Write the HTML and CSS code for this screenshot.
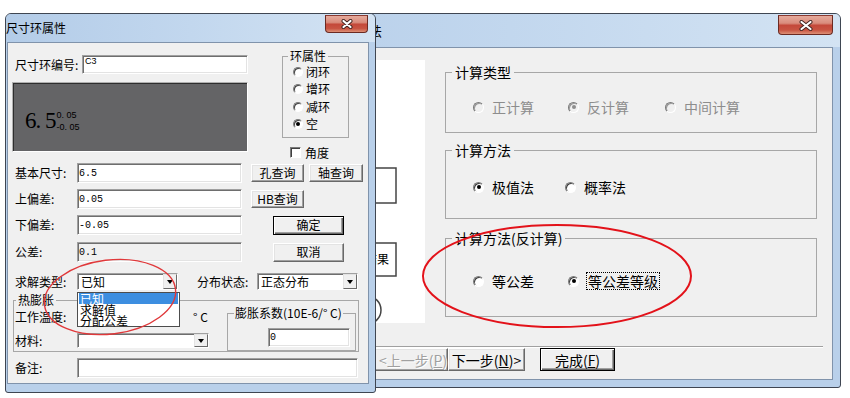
FILE: index.html
```html
<!DOCTYPE html>
<html lang="zh-CN">
<head>
  <meta charset="UTF-8">
  <meta name="viewport" content="width=device-width, initial-scale=1.0">
  <title>尺寸环属性</title>
  <link rel="stylesheet" href="styles.css">
</head>
<body>
  <div class="desktop">

    <!-- 计算向导窗口（被左边的对话框挡住一部分） -->
    <div class="window wizard">
      <div class="titlebar">
        <span class="title">计算方法</span>
        <span class="close close-lg">
          <svg width="14" height="11" viewBox="0 0 14 11"><path class="x-edge" d="M2.5 2 L11.5 9 M11.5 2 L2.5 9"/><path class="x-face" d="M2.5 2 L11.5 9 M11.5 2 L2.5 9"/></svg>
        </span>
      </div>
      <div class="client">
        <div class="wiz-main">
          <div class="preview">
            <svg width="224" height="263" viewBox="0 0 224 263">
              <rect x="110" y="108" width="85" height="35"/>
              <rect x="110" y="183" width="85" height="33"/>
              <text x="188" y="204" text-anchor="end">计算结果</text>
              <circle cx="166" cy="250" r="14"/>
            </svg>
          </div>
          <div class="options">
            <fieldset class="group g-type off">
              <legend>计算类型</legend>
              <div class="choices">
                <label class="choice c95"><span class="radio"></span>正计算</label>
                <label class="choice c97"><span class="radio on"></span>反计算</label>
                <label class="choice"><span class="radio"></span>中间计算</label>
              </div>
            </fieldset>
            <fieldset class="group g-method">
              <legend>计算方法</legend>
              <div class="choices">
                <label class="choice c92"><span class="radio on"></span>极值法</label>
                <label class="choice"><span class="radio"></span>概率法</label>
              </div>
            </fieldset>
            <fieldset class="group g-reverse">
              <legend>计算方法(反计算)</legend>
              <div class="choices">
                <label class="choice c95"><span class="radio"></span>等公差</label>
                <label class="choice"><span class="radio on"></span><span class="focus">等公差等级</span></label>
              </div>
            </fieldset>
          </div>
        </div>
        <div class="wiz-sep"></div>
        <div class="wiz-buttons">
          <span class="btn wbtn prev">&lt;上一步(<u>P</u>)</span>
          <span class="btn wbtn next">下一步(<u>N</u>)&gt;</span>
          <span class="btn wbtn finish default">完成(<u>F</u>)</span>
        </div>
      </div>
    </div>

    <!-- 尺寸环属性对话框 -->
    <div class="window ring">
      <div class="titlebar">
        <span class="title">尺寸环属性</span>
        <span class="close">
          <svg width="12" height="10" viewBox="0 0 12 10"><path class="x-edge" d="M2.5 2 L9.5 8 M9.5 2 L2.5 8"/><path class="x-face" d="M2.5 2 L9.5 8 M9.5 2 L2.5 8"/></svg>
        </span>
      </div>
      <div class="client">
        <div class="top">
          <div class="top-main">
            <div class="id-row">
              <span class="caption">尺寸环编号:</span>
              <input class="field id-field" type="text" value="C3" readonly>
            </div>
            <div class="display">
              <span class="size">6. 5</span>
              <span class="tol">
                <span>0. 05</span>
                <span>-0. 05</span>
              </span>
            </div>
          </div>
          <div class="top-side">
            <fieldset class="ring-type">
              <legend>环属性</legend>
              <div class="ring-choices">
                <label class="choice"><span class="radio"></span>闭环</label>
                <label class="choice"><span class="radio"></span>增环</label>
                <label class="choice"><span class="radio"></span>减环</label>
                <label class="choice"><span class="radio on"></span>空</label>
              </div>
            </fieldset>
            <label class="angle"><span class="check"></span>角度</label>
          </div>
        </div>

        <div class="row row-b">
          <span class="caption">基本尺寸:</span>
          <input class="field" type="text" value="6.5" readonly>
          <span class="btn query">孔查询</span>
          <span class="btn query wide">轴查询</span>
        </div>
        <div class="row row-c">
          <span class="caption">上偏差:</span>
          <input class="field" type="text" value="0.05" readonly>
          <span class="btn query">HB查询</span>
        </div>
        <div class="row row-d">
          <span class="caption">下偏差:</span>
          <input class="field" type="text" value="-0.05" readonly>
          <span class="btn action default">确定</span>
        </div>
        <div class="row row-e">
          <span class="caption">公差:</span>
          <input class="field" type="text" value="0.1" disabled>
          <span class="btn action">取消</span>
        </div>

        <div class="row row-f">
          <span class="caption">求解类型:</span>
          <div class="combo"><span class="combo-text">已知</span><span class="arrow"></span></div>
          <span class="caption caption-2">分布状态:</span>
          <div class="combo"><span class="combo-text">正态分布</span><span class="arrow"></span></div>
        </div>

        <fieldset class="thermal">
          <legend>热膨胀</legend>
          <div class="thermal-body">
            <div class="thermal-left">
              <div class="temp-row">
                <span class="caption">工作温度:</span>
                <span class="temp-slot"></span>
                <span class="unit">° C</span>
              </div>
              <div class="mat-row">
                <span class="caption">材料:</span>
                <div class="combo combo-mat"><span class="combo-text"></span><span class="arrow"></span></div>
              </div>
            </div>
            <fieldset class="coef">
              <legend>膨胀系数(10E-6/° C)</legend>
              <input class="field coef-field" type="text" value="0" readonly>
            </fieldset>
          </div>
        </fieldset>

        <div class="row row-g">
          <span class="caption">备注:</span>
          <input class="field note-field" type="text" value="" readonly>
        </div>

        <!-- 求解类型 的下拉列表 -->
        <div class="droplist">
          <div class="item selected">已知</div>
          <div class="item">求解值</div>
          <div class="item">分配公差</div>
        </div>
      </div>
    </div>

    <!-- 红色标注圈 -->
    <svg class="marks" width="850" height="398" viewBox="0 0 850 398">
      <ellipse class="mark-thin" cx="110" cy="297" rx="66" ry="37" transform="rotate(-7 110 297)"/>
      <ellipse cx="557" cy="276" rx="134" ry="51"/>
    </svg>
  </div>
</body>
</html>
```

FILE: styles.css
```css
* {
  box-sizing: border-box;
}

body {
  margin: 0;
  background: #fff;
  font-family: "Noto Sans CJK SC", "Noto Sans", sans-serif;
  font-size: 12px;
  line-height: 16px;
  color: #000;
}

.desktop {
  position: relative;
  width: 850px;
  height: 398px;
  overflow: hidden;
}

/* windows */
.window {
  position: absolute;
  display: flex;
  flex-direction: column;
  border: 1px solid #3f4652;
  border-radius: 6px 6px 3px 3px;
  background: #b9d0ea;
}

.ring {
  left: 5px;
  top: 13px;
  width: 371px;
  height: 380px;
  z-index: 2;
}

.wizard {
  left: 180px;
  top: 13px;
  width: 661px;
  height: 375px;
  z-index: 1;
}

.titlebar {
  display: flex;
  justify-content: space-between;
  align-items: flex-start;
  border-radius: 5px 5px 0 0;
  background: linear-gradient(to right, #b3cce8, #c2d7ee 50%, #d3e3f3);
}

.ring .titlebar {
  height: 28px;
  padding-right: 7px;
}

.wizard .titlebar {
  height: 33px;
  padding-right: 7px;
}

.title {
  align-self: center;
}

.wizard .title {
  width: 201px;
  text-align: right;
  font-size: 13px;
  white-space: nowrap;
}

.close {
  display: flex;
  align-items: center;
  justify-content: center;
  width: 43px;
  height: 18px;
  margin-top: 1px;
  border: 1px solid #6b2a22;
  border-top-color: #8a3a30;
  border-radius: 0 0 4px 4px;
  background: linear-gradient(#e6aa9c 0%, #d98c7c 40%, #c4493a 52%, #c85442 78%, #dd9076 100%);
}

.close-lg {
  width: 55px;
  height: 20px;
}

.x-edge {
  fill: none;
  stroke: #40231f;
  stroke-width: 4;
  stroke-linecap: round;
}

.x-face {
  fill: none;
  stroke: #fff;
  stroke-width: 2.2;
  stroke-linecap: round;
}

.client {
  position: relative;
  flex: 1;
  background: #f0f0f0;
  border: 1px solid #8093ab;
}

.ring .client {
  margin: 0 6px 8px 1px;
  padding: 7px 0 0 4px;
}

.wizard .client {
  margin: 0 7px 7px 7px;
}

/* common controls */
.caption {
  flex-shrink: 0;
  white-space: nowrap;
}

.field {
  display: block;
  margin: 0;
  padding: 0 1px;
  height: 20px;
  font-family: "Liberation Mono", monospace;
  font-size: 10px;
  color: #000;
  background: #fff;
  border: 1px solid;
  border-color: #a0a0a0 #fff #fff #a0a0a0;
  box-shadow: inset 1px 1px #6e6e6e, inset -1px -1px #e3e3e3;
  outline: none;
}

.field:disabled {
  background: #f0f0f0;
  color: #000;
}

.btn {
  display: flex;
  align-items: center;
  justify-content: center;
  flex-shrink: 0;
  background: #f0f0f0;
  border: 1px solid;
  border-color: #fff #696969 #696969 #fff;
  box-shadow: inset -1px -1px #a0a0a0, inset 1px 1px #e3e3e3;
  white-space: nowrap;
}

.btn.default {
  border-color: #000;
  box-shadow: inset 1px 1px #fff, inset -1px -1px #696969, inset -2px -2px #a0a0a0;
}

.radio {
  position: relative;
  display: inline-block;
  flex-shrink: 0;
  width: 10px;
  height: 10px;
  border-radius: 50%;
  background: #fff;
  border: 1px solid;
  border-color: #7a7a7a #fff #fff #7a7a7a;
  box-shadow: inset 1px 1px #404040;
}

.radio.on::after {
  content: "";
  position: absolute;
  left: 2px;
  top: 2px;
  width: 4px;
  height: 4px;
  border-radius: 50%;
  background: #000;
}

.choice {
  display: flex;
  align-items: center;
  white-space: nowrap;
}

.check {
  display: inline-block;
  width: 11px;
  height: 11px;
  background: #fff;
  border: 1px solid;
  border-color: #7a7a7a #fff #fff #7a7a7a;
  box-shadow: inset 1px 1px #404040;
}

fieldset {
  margin: 0;
  padding: 0;
  min-width: 0;
  border: 1px solid #a7a7a7;
}

legend {
  padding: 0 2px;
}

.combo {
  display: flex;
  flex-shrink: 0;
  width: 101px;
  height: 17px;
  background: #fff;
  border: 1px solid;
  border-color: #a0a0a0 #fff #fff #a0a0a0;
  box-shadow: inset 1px 1px #6e6e6e;
}

.combo-text {
  flex: 1;
  padding: 0 0 0 3px;
  line-height: 15px;
  white-space: nowrap;
}

.arrow {
  display: flex;
  align-items: center;
  justify-content: center;
  width: 14px;
  background: #f0f0f0;
  border: 1px solid;
  border-color: #e3e3e3 #696969 #696969 #e3e3e3;
}

.arrow::after {
  content: "";
  border-left: 3.5px solid transparent;
  border-right: 3.5px solid transparent;
  border-top: 4px solid #000;
}

/* ring dialog layout */
.top {
  display: flex;
  align-items: flex-start;
}

.top-main {
  width: 236px;
  padding-top: 5px;
}

.id-row {
  display: flex;
  align-items: center;
  height: 19px;
}

.id-row .caption {
  width: 70px;
  padding-left: 3px;
}

.id-field {
  width: 166px;
  height: 19px;
  padding: 0 2px 7px;
  font-family: "Liberation Sans", sans-serif;
  font-size: 9px;
}

.display {
  display: flex;
  align-items: center;
  height: 70px;
  margin-top: 8px;
  padding: 8px 0 0 12px;
  background: #646466;
  border: 1px solid;
  border-color: #b0b0b0 #fff #fff #b0b0b0;
  box-shadow: inset 1px 1px #2e2e2e;
}

.size {
  font-family: "Liberation Serif", serif;
  font-size: 23px;
  line-height: 24px;
  letter-spacing: -1px;
  white-space: pre;
}

.tol {
  display: flex;
  flex-direction: column;
  margin-left: 1px;
  font-family: "Liberation Sans", sans-serif;
  font-size: 9px;
  line-height: 12px;
  white-space: pre;
}

.top-side {
  margin-left: 34px;
}

.ring-type {
  width: 67px;
  padding-top: 1px;
  padding-bottom: 4px;
}

.ring-type legend {
  margin-left: 5px;
  line-height: 12px;
}

.ring-choices .choice {
  height: 17.5px;
  padding-left: 10px;
}

.ring-choices .radio {
  margin-right: 3px;
}

.angle {
  display: flex;
  align-items: center;
  height: 11px;
  margin-top: 9px;
  padding-left: 8px;
}

.angle .check {
  margin-right: 4px;
}

.row {
  display: flex;
  align-items: center;
  height: 20px;
}

.row .caption {
  width: 65px;
  padding-left: 3px;
}

.row .field {
  width: 165px;
}

.row-b {
  margin-top: 5px;
}

.row-c,
.row-d {
  margin-top: 6px;
}

.row-e {
  margin-top: 7px;
}

.query {
  width: 53px;
  height: 18px;
  margin-left: 9px;
}

.query.wide {
  width: 54px;
  margin-left: 5px;
}

.action {
  width: 71px;
  height: 19px;
  margin-left: 31px;
}

.row-f {
  height: 17px;
  margin-top: 11px;
}

.row .caption-2 {
  width: 60px;
  margin-left: 19px;
  padding-left: 0;
}

.thermal {
  width: 346px;
  margin: 4px 0 0 1px;
}

.thermal > legend {
  margin-left: 2px;
  line-height: 12px;
}

.thermal-body {
  display: flex;
  align-items: flex-start;
  padding-left: 1px;
}

.thermal-left {
  width: 212px;
}

.thermal-left .caption {
  width: 62px;
}

.temp-row {
  display: flex;
  align-items: center;
  height: 18px;
  margin-top: 2px;
}

.temp-slot {
  width: 103px;
}

.unit {
  margin-left: 13px;
}

.mat-row {
  display: flex;
  align-items: center;
  height: 15px;
  margin-top: 7px;
}

.combo-mat {
  width: 132px;
  height: 15px;
}

.combo-mat .combo-text {
  line-height: 13px;
}

.coef {
  width: 129px;
  margin-top: 1px;
  padding: 0 0 3px 40px;
}

.coef legend {
  margin-left: -34px;
  padding: 0 1px;
  line-height: 12px;
  white-space: nowrap;
}

.coef-field {
  width: 82px;
  height: 19px;
  margin-top: 9px;
}

.row-g {
  margin-top: 6px;
}

.row .note-field {
  width: 281px;
}

.droplist {
  position: absolute;
  left: 69px;
  top: 249px;
  width: 103px;
  height: 35px;
  padding: 0 1px;
  background: #fff;
  border: 1px solid #4d4d4d;
  line-height: 11.2px;
}

.droplist .item {
  height: 11px;
  padding-left: 1px;
  white-space: nowrap;
}

.droplist .selected {
  background: #3d8ee0;
  color: #fff;
}

/* wizard layout */
.wiz-main {
  display: flex;
  align-items: flex-start;
  height: 298px;
}

.preview {
  width: 224px;
  height: 263px;
  margin: 12px 0 0 12px;
  background: #fff;
}

.preview svg {
  display: block;
}

.preview rect,
.preview circle {
  fill: #fff;
  stroke: #444;
  stroke-width: 1.5;
}

.preview text {
  font-size: 12px;
  fill: #000;
}

.options {
  width: 372px;
  margin: 16px 0 0 20px;
  font-size: 14px;
}

.group legend {
  margin-left: 6px;
  padding: 0 3px;
  line-height: 16px;
}

.group .choices {
  display: flex;
  align-items: center;
  height: 16px;
  padding-left: 27px;
}

.group .radio {
  width: 11px;
  height: 11px;
  margin-right: 8px;
}

.group .radio.on::after {
  left: 2.5px;
  top: 2.5px;
}

.g-type .choices {
  margin: 19px 0 17px;
}

.g-method {
  margin-top: 9px;
}

.g-method .choices {
  margin: 21px 0 23px;
}

.g-reverse {
  margin-top: 11px;
}

.g-reverse .choices {
  margin: 27px 0 27px;
}

.c95 {
  width: 95px;
}

.c97 {
  width: 97px;
}

.c92 {
  width: 92px;
}

.off .choice {
  color: #8d8d8d;
}

.off .radio {
  background: #f0f0f0;
  box-shadow: inset 1px 1px #9a9a9a;
}

.off .radio.on::after {
  background: #8d8d8d;
}

.focus {
  outline: 1px dotted #000;
  padding: 0 1px;
}

.wiz-sep {
  width: 634px;
  height: 2px;
  border-top: 1px solid #a0a0a0;
  border-bottom: 1px solid #fff;
}

.wiz-buttons {
  display: flex;
  height: 23px;
  padding-left: 183px;
}

.wbtn {
  height: 23px;
  font-size: 14px;
}

.prev {
  width: 76px;
  justify-content: flex-start;
  padding-left: 6px;
  color: #a0a0a0;
  text-shadow: 1px 1px #fff;
}

.next {
  width: 77px;
}

.finish {
  width: 75px;
  margin-left: 15px;
}

/* red annotation rings */
.marks {
  position: absolute;
  left: 0;
  top: 0;
  z-index: 3;
  pointer-events: none;
}

.marks ellipse {
  fill: none;
  stroke: #e3121a;
  stroke-width: 2;
}

.marks .mark-thin {
  stroke: #e0383a;
  stroke-width: 1.4;
}
```
